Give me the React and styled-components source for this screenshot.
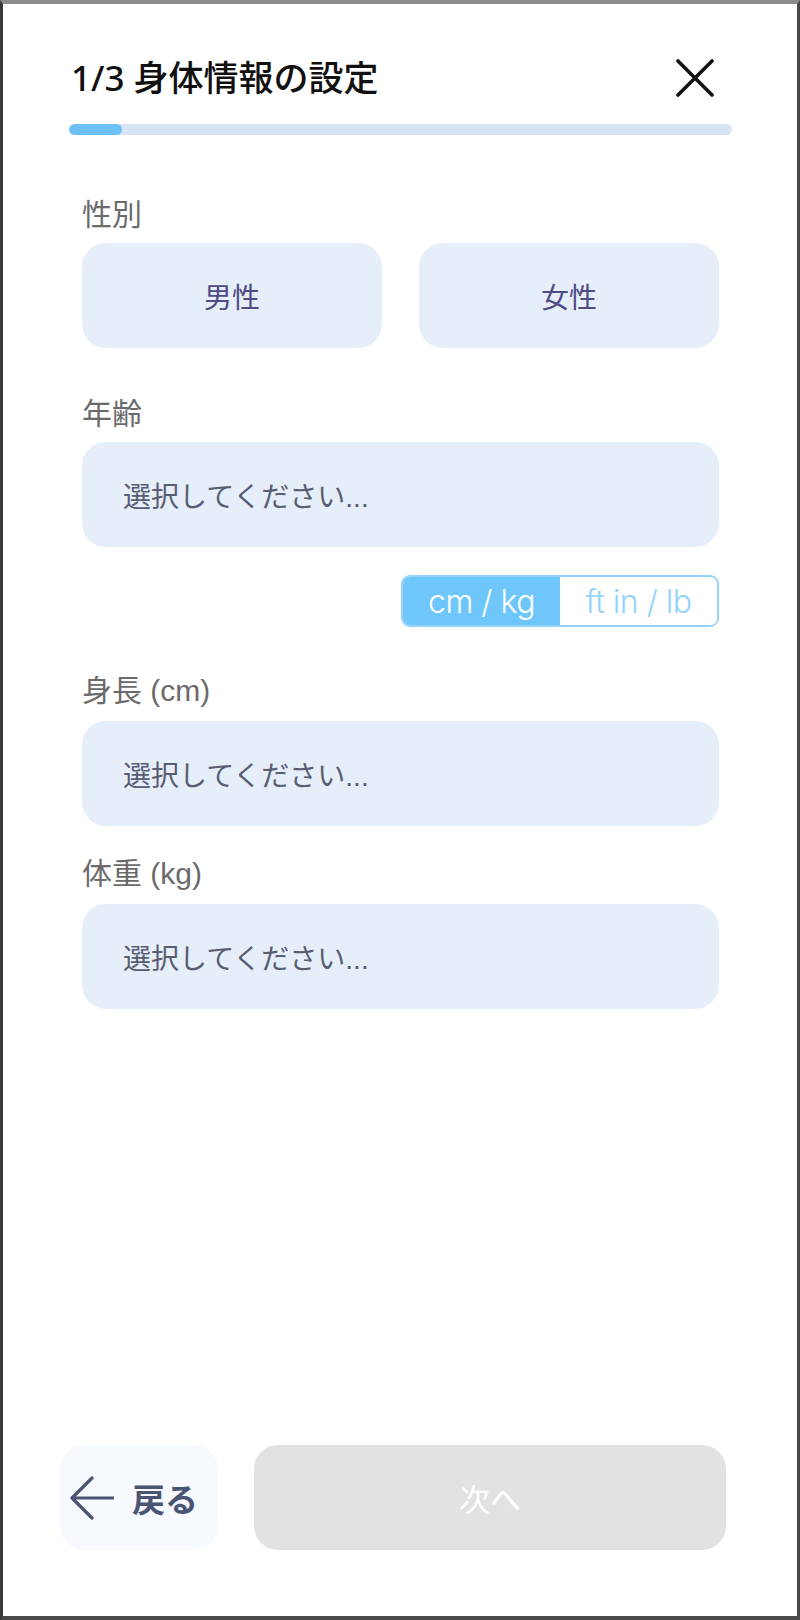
import React from 'react';
import styled, { createGlobalStyle } from 'styled-components';

const GlobalStyle = createGlobalStyle`
  html, body {
    margin: 0;
    padding: 0;
    background: #ffffff;
  }
  * {
    box-sizing: border-box;
  }
`;

const JP = `"Liberation Sans", "Noto Sans CJK JP", sans-serif`;

const App = () => {
  return (
    <>
      <GlobalStyle />
      <Screen>
        <Header>
          <TitleRow>
            <Title>1/3 身体情報の設定</Title>
            <CloseButton aria-label="閉じる">
              <svg width="38" height="38" viewBox="0 0 38 38">
                <path d="M2 2 L36 36 M36 2 L2 36" stroke="#111" strokeWidth="3.6" strokeLinecap="round" />
              </svg>
            </CloseButton>
          </TitleRow>
          <Progress>
            <ProgressFill style={{ width: '8%' }} />
          </Progress>
        </Header>

        <Form>
          <Label $top={62} $bottom={10}>性別</Label>
          <GenderRow>
            <Choice>男性</Choice>
            <Choice>女性</Choice>
          </GenderRow>

          <Label $top={48} $bottom={10}>年齢</Label>
          <Select>選択してください...</Select>

          <UnitToggle>
            <UnitOption $active>cm / kg</UnitOption>
            <UnitOption>ft in / lb</UnitOption>
          </UnitToggle>

          <Label $top={46}>身長 (cm)</Label>
          <Select>選択してください...</Select>

          <Label $top={30}>体重 (kg)</Label>
          <Select>選択してください...</Select>
        </Form>

        <Footer>
          <BackButton>
            <svg width="44" height="44" viewBox="0 0 44 44">
              <path d="M22 2 L2 22 L22 42 M2 22 H43" stroke="#4b5573" strokeWidth="3.2" fill="none" strokeLinecap="round" strokeLinejoin="round" />
            </svg>
            <span>戻る</span>
          </BackButton>
          <NextButton disabled>次へ</NextButton>
        </Footer>
      </Screen>
    </>
  );
};

export default App;

const Screen = styled.div`
  width: 800px;
  height: 1620px;
  display: flex;
  flex-direction: column;
  background: #ffffff;
  border-top: 4px solid #8c8c8c;
  border-left: 3px solid #3a3a3a;
  border-right: 3px solid #4a4a4a;
  border-bottom: 4px solid #4a4a4a;
  font-family: ${JP};
`;

const Header = styled.div`
  padding: 54px 65px 0 66px;
`;

const TitleRow = styled.div`
  display: flex;
  align-items: center;
  justify-content: space-between;
  height: 40px;
`;

const Title = styled.h1`
  margin: 0;
  font-family: "Noto Sans", "Noto Sans CJK JP", sans-serif;
  font-size: 35px;
  line-height: 40px;
  font-weight: 500;
  color: #111111;
  padding-left: 2px;
`;

const CloseButton = styled.button`
  display: flex;
  padding: 0;
  margin-right: 18px;
  border: none;
  background: none;
`;

const Progress = styled.div`
  margin-top: 26px;
  height: 11px;
  border-radius: 6px;
  background: #d6e4f4;
  overflow: hidden;
`;

const ProgressFill = styled.div`
  height: 100%;
  border-radius: 6px;
  background: #6cc1f7;
`;

const Form = styled.div`
  display: flex;
  flex-direction: column;
  padding: 0 78px 0 79px;
`;

const Label = styled.div`
  margin-top: ${(p) => p.$top}px;
  margin-bottom: ${(p) => p.$bottom ?? 12}px;
  font-size: 30px;
  line-height: 36px;
  color: #6b6b6b;
`;

const GenderRow = styled.div`
  display: grid;
  grid-template-columns: 1fr 1fr;
  gap: 37px;
`;

const Choice = styled.button`
  height: 105px;
  border: none;
  border-radius: 24px;
  background: #e6eef9;
  font-family: ${JP};
  font-size: 28px;
  color: #4f4b85;
`;

const Select = styled.div`
  display: flex;
  align-items: center;
  height: 105px;
  padding-left: 41px;
  border-radius: 24px;
  background: #e6eef9;
  font-size: 28px;
  color: #585d72;
`;

const UnitToggle = styled.div`
  align-self: flex-end;
  display: flex;
  margin-top: 28px;
  width: 318px;
  height: 52px;
  border: 2px solid #94d2fb;
  border-radius: 9px;
  overflow: hidden;
`;

const UnitOption = styled.div`
  flex: 1;
  display: flex;
  align-items: center;
  justify-content: center;
  font-family: Inter, "Open Sans", sans-serif;
  font-size: 32px;
  font-weight: 300;
  letter-spacing: -0.5px;
  background: ${(p) => (p.$active ? '#6ec6fa' : '#ffffff')};
  color: ${(p) => (p.$active ? '#ffffff' : '#94d2fb')};
`;

const Footer = styled.div`
  margin-top: auto;
  display: flex;
  gap: 36px;
  padding: 0 71px 66px 57px;
`;

const BackButton = styled.button`
  display: flex;
  align-items: center;
  justify-content: center;
  gap: 18px;
  width: 158px;
  height: 105px;
  padding: 0 10px 0 0;
  border: none;
  border-radius: 24px;
  background: #f6f9fe;
  font-family: ${JP};
  font-size: 33px;
  font-weight: 600;
  color: #4b5573;
`;

const NextButton = styled.button`
  flex: 1;
  height: 105px;
  border: none;
  border-radius: 24px;
  background: #e1e2e4;
  font-family: ${JP};
  font-size: 31px;
  color: #ffffff;
`;
